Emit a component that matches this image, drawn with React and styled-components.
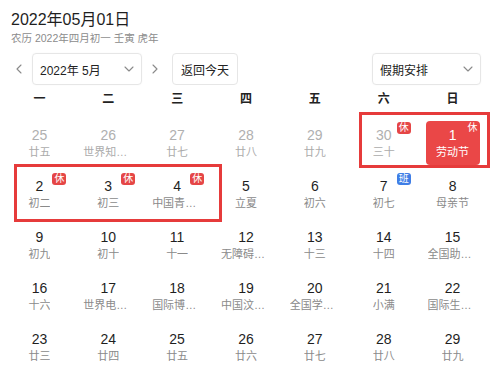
import React from "react";
import styled, { createGlobalStyle } from "styled-components";

const Global = createGlobalStyle`
  html, body { margin: 0; padding: 0; overflow: hidden; background: #fff; }
  body { font-family: "Liberation Sans", "Noto Sans CJK SC", sans-serif; color: #222; }
  * { box-sizing: border-box; }
`;

const Page = styled.div`
  width: 492px;
  height: 369px;
  padding-top: 9px;
  overflow: hidden;
`;

const Head = styled.div`
  padding: 0 11px;
`;

const Title = styled.div`
  font-size: 16px;
  line-height: 22px;
  color: #1f1f1f;
`;

const Sub = styled.div`
  font-size: 10.5px;
  line-height: 14px;
  color: #8c8c8c;
`;

const Toolbar = styled.div`
  display: flex;
  align-items: center;
  height: 32px;
  margin-top: 8px;
  padding: 0 11px 0 9px;
`;

const NavArrow = styled.button`
  width: 20px;
  height: 32px;
  padding: 0;
  border: 0;
  background: none;
  display: flex;
  align-items: center;
  justify-content: center;
  margin: ${(p) => (p.$side === "left" ? "0 3px 0 0" : "0 7px 0 3px")};
`;

const Select = styled.div`
  width: ${(p) => p.$w}px;
  height: 32px;
  border: 1px solid #e6e6e6;
  border-radius: 4px;
  display: flex;
  align-items: center;
  justify-content: space-between;
  padding: 0 7px 0 7px;
  font-size: 12px;
  color: #222;
  box-shadow: 0 0 2px rgba(0, 0, 0, 0.04);
`;

const TodayBtn = styled.button`
  width: 66px;
  height: 32px;
  border: 1px solid #e6e6e6;
  border-radius: 4px;
  background: #fff;
  font-family: inherit;
  font-size: 12px;
  color: #222;
  padding: 0;
`;

const Spacer = styled.div`
  flex: 1;
`;

const Calendar = styled.div`
  position: relative;
  margin: 0 5px;
`;

const WeekRow = styled.div`
  display: grid;
  grid-template-columns: repeat(7, 1fr);
  height: 32px;
  padding-top: 6px;
`;

const WeekDay = styled.div`
  text-align: center;
  font-size: 12px;
  line-height: 16px;
  font-weight: bold;
  color: #222;
`;

const Days = styled.div`
  display: grid;
  grid-template-columns: repeat(7, 1fr);
  grid-auto-rows: 51px;
`;

const Cell = styled.div`
  display: flex;
  align-items: center;
  justify-content: center;
`;

const CellBox = styled.div`
  position: relative;
  width: 54px;
  height: 44px;
  border-radius: 4px;
  display: flex;
  flex-direction: column;
  align-items: center;
  justify-content: center;
  background: ${(p) => (p.$active ? "#ea4747" : "transparent")};
`;

const Num = styled.div`
  font-size: 14px;
  line-height: 18px;
  color: ${(p) => (p.$active ? "#fff" : p.$other ? "#b0b0b0" : "#1f1f1f")};
`;

const Lunar = styled.div`
  max-width: 50px;
  font-size: 11px;
  line-height: 16px;
  white-space: nowrap;
  overflow: hidden;
  text-overflow: ellipsis;
  color: ${(p) => (p.$active ? "#fff" : p.$other ? "#ababab" : "#8a8a8a")};
`;

const Badge = styled.span`
  position: absolute;
  top: 1px;
  right: 0;
  width: 14px;
  height: 12px;
  border-radius: 3px;
  font-size: 10px;
  line-height: 12px;
  text-align: center;
  color: #fff;
  background: ${(p) => (p.$plain ? "transparent" : p.$kind === "work" ? "#3f7ee6" : "#e54646")};
`;

const Mark = styled.div`
  position: absolute;
  border: 3px solid #e63b3b;
  pointer-events: none;
`;

const Chevron = ({ dir }) => {
  const pts = {
    left: "5,1 1,5 5,9",
    right: "1,1 5,5 1,9",
    down: "1,1 5,5 9,1",
  }[dir];
  const w = dir === "down" ? 10 : 6;
  const h = dir === "down" ? 6 : 10;
  return (
    <svg width={w} height={h} viewBox={`0 0 ${w} ${h}`} fill="none">
      <polyline points={pts} stroke="#8a8a8a" strokeWidth="1.1" strokeLinecap="round" strokeLinejoin="round" />
    </svg>
  );
};

const weekdays = ["一", "二", "三", "四", "五", "六", "日"];

const days = [
  { d: 25, l: "廿五", o: true },
  { d: 26, l: "世界知识产权日", o: true },
  { d: 27, l: "廿七", o: true },
  { d: 28, l: "廿八", o: true },
  { d: 29, l: "廿九", o: true },
  { d: 30, l: "三十", o: true, b: "rest" },
  { d: 1, l: "劳动节", a: true, b: "rest" },
  { d: 2, l: "初二", b: "rest" },
  { d: 3, l: "初三", b: "rest" },
  { d: 4, l: "中国青年节", b: "rest" },
  { d: 5, l: "立夏" },
  { d: 6, l: "初六" },
  { d: 7, l: "初七", b: "work" },
  { d: 8, l: "母亲节" },
  { d: 9, l: "初九" },
  { d: 10, l: "初十" },
  { d: 11, l: "十一" },
  { d: 12, l: "无障碍设计日" },
  { d: 13, l: "十三" },
  { d: 14, l: "十四" },
  { d: 15, l: "全国助残日" },
  { d: 16, l: "十六" },
  { d: 17, l: "世界电信日" },
  { d: 18, l: "国际博物馆日" },
  { d: 19, l: "中国汶川地震纪念日" },
  { d: 20, l: "全国学生营养日" },
  { d: 21, l: "小满" },
  { d: 22, l: "国际生物多样性日" },
  { d: 23, l: "廿三" },
  { d: 24, l: "廿四" },
  { d: 25, l: "廿五" },
  { d: 26, l: "廿六" },
  { d: 27, l: "廿七" },
  { d: 28, l: "廿八" },
  { d: 29, l: "廿九" },
];

export default function App() {
  return (
    <Page>
      <Global />
      <Head>
        <Title>2022年05月01日</Title>
        <Sub>农历 2022年四月初一 壬寅 虎年</Sub>
      </Head>
      <Toolbar>
        <NavArrow $side="left"><Chevron dir="left" /></NavArrow>
        <Select $w={110}>
          <span>2022年 5月</span>
          <Chevron dir="down" />
        </Select>
        <NavArrow $side="right"><Chevron dir="right" /></NavArrow>
        <TodayBtn>返回今天</TodayBtn>
        <Spacer />
        <Select $w={109}>
          <span>假期安排</span>
          <Chevron dir="down" />
        </Select>
      </Toolbar>
      <Calendar>
        <WeekRow>
          {weekdays.map((w) => (
            <WeekDay key={w}>{w}</WeekDay>
          ))}
        </WeekRow>
        <Days>
          {days.map((x, i) => (
            <Cell key={i}>
              <CellBox $active={x.a}>
                <Num $other={x.o} $active={x.a}>{x.d}</Num>
                <Lunar $other={x.o} $active={x.a}>{x.l}</Lunar>
                {x.b && (
                  <Badge $kind={x.b} $plain={x.a}>
                    {x.b === "work" ? "班" : "休"}
                  </Badge>
                )}
              </CellBox>
            </Cell>
          ))}
        </Days>
        <Mark style={{ left: 354, top: 27, width: 131, height: 56 }} />
        <Mark style={{ left: 9, top: 79, width: 208, height: 58 }} />
      </Calendar>
    </Page>
  );
}
